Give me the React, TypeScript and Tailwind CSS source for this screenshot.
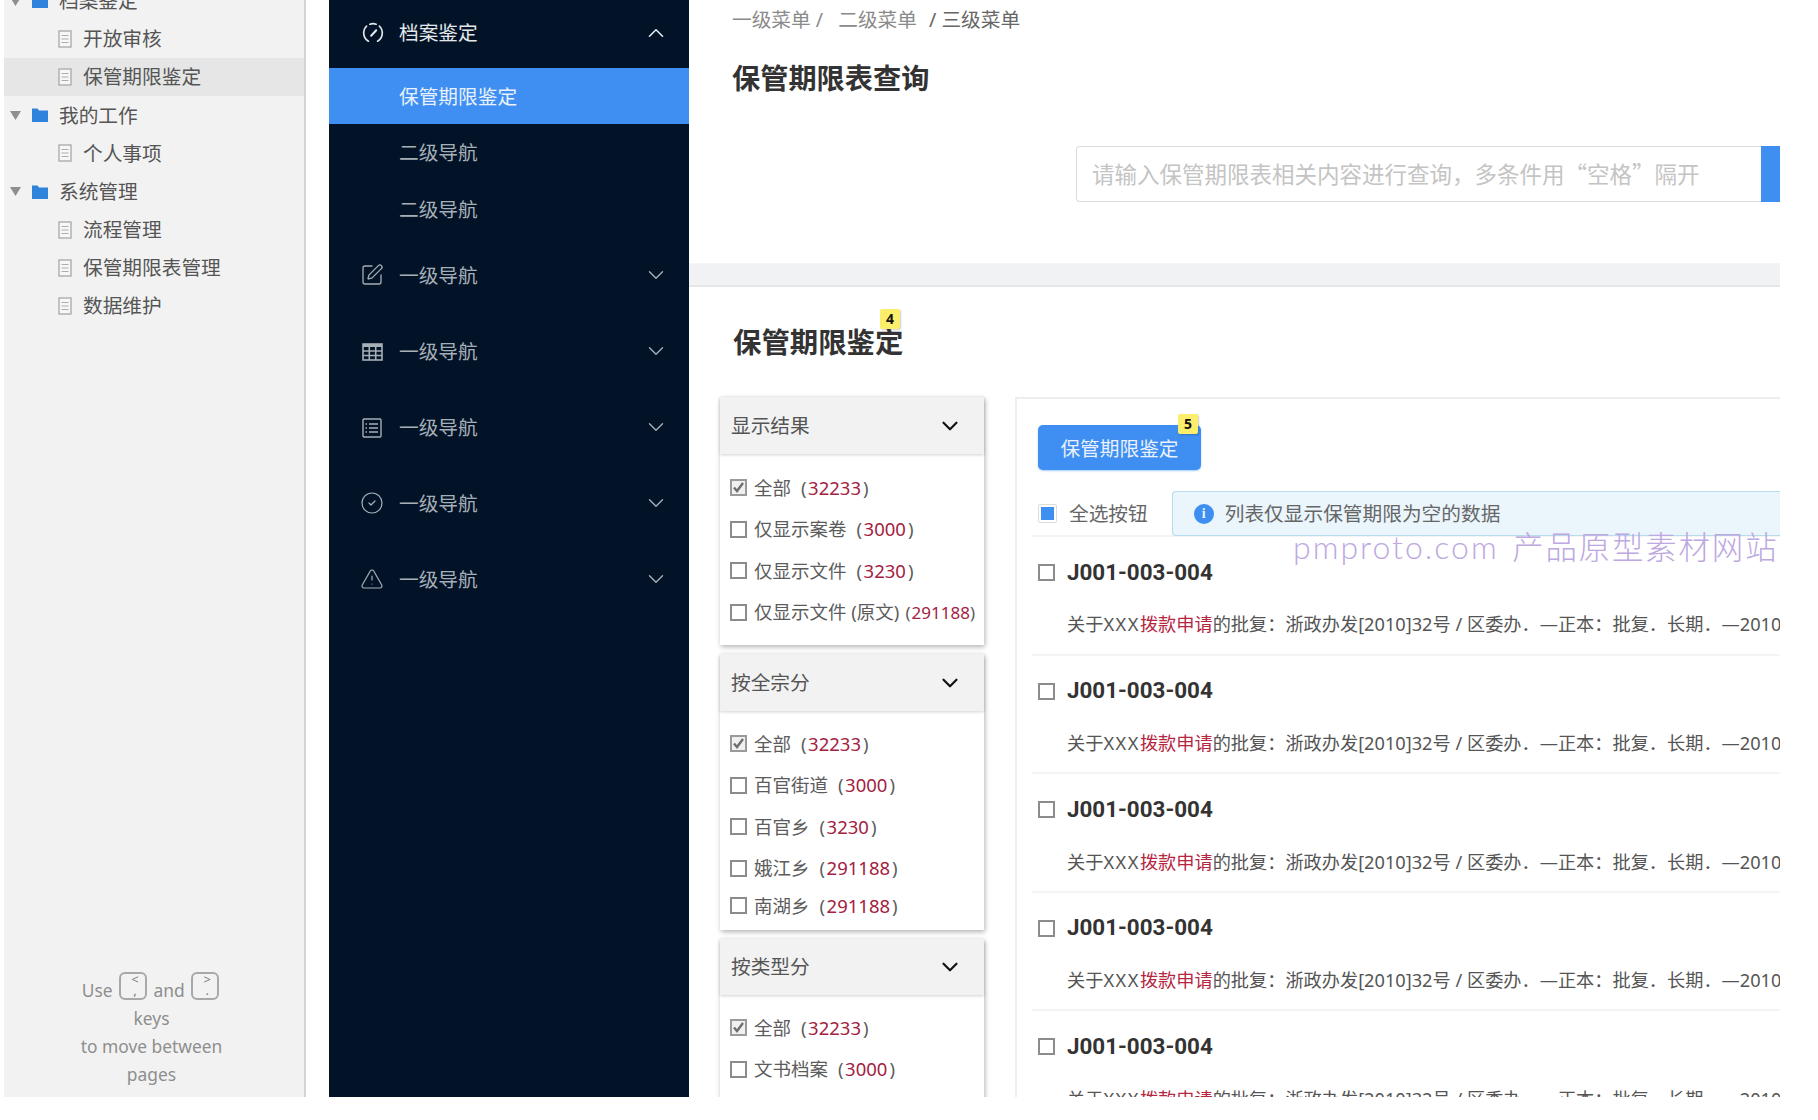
import React from "react";
import { SquarePen, CircleCheck, TriangleAlert, ChevronDown, ChevronUp } from "lucide-react";

const FONT = "[font-family:'Noto_Sans','Noto_Sans_CJK_SC',sans-serif]";

function Gauge() {
  return (
    <svg width="22" height="22" viewBox="0 0 24 24" fill="none" stroke="currentColor" strokeWidth="1.8" strokeLinecap="round">
      <path d="M7 21 A10.5 10.5 0 0 1 5 4.5" />
      <path d="M8.5 2.4 A10.5 10.5 0 0 1 15.5 2.4" />
      <path d="M19 4.5 A10.5 10.5 0 0 1 17 21" />
      <path d="M10 15 L15.5 9" strokeWidth="2.2" />
    </svg>
  );
}

function GridIcon() {
  return (
    <svg width="21" height="18" viewBox="0 0 21 18" fill="none" stroke="currentColor" strokeWidth="1.6">
      <rect x="1" y="1" width="19" height="16" />
      <path d="M1 2.5H20" strokeWidth="3" />
      <path d="M1 8H20M1 12.5H20M7.3 1V17M13.7 1V17" />
    </svg>
  );
}

function ListIcon() {
  return (
    <svg width="20" height="20" viewBox="0 0 20 20" fill="none" stroke="currentColor" strokeWidth="1.4">
      <rect x="1" y="1" width="18" height="18" rx="1" />
      <path d="M7 6H16M7 10H16M7 14H16" />
      <path d="M3.5 6H5M3.5 10H5M3.5 14H5" />
    </svg>
  );
}

function DocIcon() {
  return (
    <svg width="14" height="18" viewBox="0 0 14 18" fill="#f7f7f7" stroke="#adadad" strokeWidth="1.4">
      <rect x="1" y="1" width="12" height="16" />
      <path d="M3.5 5.5H10.5M3.5 9H10.5M3.5 12.5H10.5" strokeWidth="1.2" />
    </svg>
  );
}

function FolderIcon() {
  return (
    <svg width="16" height="14" viewBox="0 0 16 14" fill="#2f83da">
      <path d="M0 0.5H5.5L7 2.5H16V14H0Z" />
    </svg>
  );
}

function Caret() {
  return (
    <svg width="11" height="9" viewBox="0 0 11 9" fill="#8f8f8f">
      <path d="M0 0H11L5.5 9Z" />
    </svg>
  );
}

function TreeParent({ label }: { label: string }) {
  return (
    <div className="flex h-[38.1px] items-center">
      <span className="ml-[6px] flex w-[17px] justify-start"><Caret /></span>
      <span className="ml-[5px]"><FolderIcon /></span>
      <span className="ml-[11px] text-[19.7px] text-[#555555]">{label}</span>
    </div>
  );
}

function TreeChild({ label, active }: { label: string; active?: boolean }) {
  return (
    <div className={`flex h-[38.1px] items-center pl-[54px] ${active ? "bg-[#e6e6e6]" : ""}`}>
      <DocIcon />
      <span className="ml-[11px] text-[19.7px] text-[#555555]">{label}</span>
    </div>
  );
}

function KeyCap({ top, bottom }: { top: string; bottom: string }) {
  return (
    <span className="relative -top-[4px] mx-[2px] inline-flex h-[28px] w-[28px] flex-col rounded-[6px] border-2 border-[#a8a8a8] pl-[4px] align-top text-[13px] leading-[11px] text-[#7e7e7e]">
      <span>{top}</span>
      <span>{bottom}</span>
    </span>
  );
}

function LeftPanel() {
  return (
    <aside className="relative flex h-full w-[302px] shrink-0 flex-col border-r-2 border-[#d4d4d4] bg-[#f2f2f2]">
      <div className="mt-[-18px]">
        <TreeParent label="档案鉴定" />
        <TreeChild label="开放审核" />
        <TreeChild label="保管期限鉴定" active />
        <TreeParent label="我的工作" />
        <TreeChild label="个人事项" />
        <TreeParent label="系统管理" />
        <TreeChild label="流程管理" />
        <TreeChild label="保管期限表管理" />
        <TreeChild label="数据维护" />
      </div>
      <div className="mt-auto pb-[9px] pr-[5px] text-center text-[17.4px] leading-[28px] text-[#8e8e8e]">
        <div>
          Use <KeyCap top="<" bottom="," /> and <KeyCap top=">" bottom="." />
        </div>
        <div>keys</div>
        <div>to move between</div>
        <div>pages</div>
      </div>
    </aside>
  );
}

function NavRow({ icon, label }: { icon: React.ReactNode; label: string }) {
  return (
    <div className="flex h-[76px] items-center text-[#a7afb6]">
      <span className="flex w-[70px] justify-start pl-[33px]">{icon}</span>
      <span className="text-[19.7px]">{label}</span>
      <ChevronDown className="ml-auto mr-[20px] -translate-y-[1px]" size={26} strokeWidth={1.3} />
    </div>
  );
}

function Nav() {
  return (
    <nav className="h-full w-[360px] shrink-0 bg-[#021328]">
      <div className="flex h-[68px] items-center pb-[3px] text-[#e4e8ea]">
        <span className="flex w-[70px] pl-[33px]"><Gauge /></span>
        <span className="text-[19.7px]">档案鉴定</span>
        <ChevronUp className="ml-auto mr-[20px]" size={26} strokeWidth={1.5} />
      </div>
      <div className="flex h-[56px] items-center bg-[#3f8ef1] pl-[70px] pt-[2px] text-[19.7px] text-[#e8f1fc]">保管期限鉴定</div>
      <div className="flex h-[57px] items-center pl-[70px] pt-[1px] text-[19.7px] text-[#a7afb6]">二级导航</div>
      <div className="flex h-[57px] items-center pl-[70px] text-[19.7px] text-[#a7afb6]">二级导航</div>
      <NavRow icon={<SquarePen className="-ml-[2px] -translate-y-[1px]" size={24} strokeWidth={1.3} />} label="一级导航" />
      <NavRow icon={<GridIcon />} label="一级导航" />
      <NavRow icon={<ListIcon />} label="一级导航" />
      <NavRow icon={<CircleCheck className="-ml-[2px] -translate-y-[1px]" size={24} strokeWidth={1.2} />} label="一级导航" />
      <NavRow icon={<TriangleAlert className="-ml-[2px] -translate-y-[1px]" size={24} strokeWidth={1.2} />} label="一级导航" />
    </nav>
  );
}

function Badge({ n, className }: { n: number; className: string }) {
  return (
    <span className={`absolute flex h-[20px] w-[20px] items-center justify-center rounded-[2px] bg-[#fbee6a] text-[14px] font-bold leading-none text-[#111111] shadow-[1px_1px_2px_rgba(0,0,0,0.2)] ${className}`}>
      {n}
    </span>
  );
}

function Check({ checked }: { checked?: boolean }) {
  return (
    <span className={`relative flex h-[17px] w-[17px] shrink-0 items-center justify-center border-2 ${checked ? "border-[#9a9a9a] bg-[#f0f0f0]" : "border-[#8c8c8c] bg-white"}`}>
      {checked && (
        <svg width="13" height="13" viewBox="0 0 13 13" fill="none" stroke="#6f6f6f" strokeWidth="2.4">
          <path d="M2 6.5L5 10L11 2" />
        </svg>
      )}
    </span>
  );
}

type FacetRow = { label: string; count: string; checked?: boolean; short?: boolean; tight?: boolean };

function Facet({ title, rows, headerH, bodyH }: { title: string; rows: FacetRow[]; headerH: string; bodyH: string }) {
  return (
    <section className="w-[264px] bg-white shadow-[1px_2px_5px_rgba(0,0,0,0.3)]">
      <div className={`flex ${headerH} items-center justify-between bg-[#f2f2f2] pl-[11px] pr-[21px] shadow-[0_1px_3px_rgba(0,0,0,0.18)]`}>
        <span className="text-[19.7px] text-[#555555]">{title}</span>
        <ChevronDown className="text-[#111111]" size={26} strokeWidth={2} />
      </div>
      <div className={`flex ${bodyH} flex-col pl-[10px]`}>
        {rows.map((r) => (
          <div key={r.label} className={`flex ${r.short ? "h-[33.5px]" : "h-[41.5px]"} items-center gap-[7px] whitespace-nowrap text-[18.5px] text-[#5c5c5c]`}>
            <Check checked={r.checked} />
            <span>
              {r.label}
              <span className={r.tight ? "ml-[6px] text-[17px]" : "ml-[10px]"}>(</span>
              <span className={r.tight ? "ml-[1px] text-[17px] text-[#a3213f]" : "ml-[1.5px] text-[#a3213f]"}>{r.count}</span>
              <span className={r.tight ? "text-[17px]" : "ml-[2px]"}>)</span>
            </span>
          </div>
        ))}
      </div>
    </section>
  );
}

function ResultRow({ last }: { last?: boolean }) {
  return (
    <div className={`ml-[15px] h-[118.6px] ${last ? "" : "border-b-2 border-[#f4f4f4]"}`}>
      <div className="flex h-[70px] items-center pl-[6px] pt-[1px]">
        <Check />
        <span className="ml-[12px] text-[22.4px] font-bold text-[#333333] [font-family:'Roboto',sans-serif]">J001-003-004</span>
      </div>
      <div className="flex h-[36px] items-center whitespace-nowrap pl-[35px] text-[18.2px] text-[#555555]">
        关于<span className="tracking-[1.5px]">XXX</span><span className="text-[#b5263f]">拨款申请</span>的批复：浙政办发[2010]32号 / 区委办．—正本：批复．长期．—2010
      </div>
    </div>
  );
}

export default function App() {
  const f1: FacetRow[] = [
    { label: "全部", count: "32233", checked: true },
    { label: "仅显示案卷", count: "3000" },
    { label: "仅显示文件", count: "3230" },
    { label: "仅显示文件 (原文)", count: "291188", tight: true },
  ];
  const f2: FacetRow[] = [
    { label: "全部", count: "32233", checked: true },
    { label: "百官街道", count: "3000" },
    { label: "百官乡", count: "3230" },
    { label: "娥江乡", count: "291188" },
    { label: "南湖乡", count: "291188", short: true },
  ];
  const f3: FacetRow[] = [
    { label: "全部", count: "32233", checked: true },
    { label: "文书档案", count: "3000" },
  ];
  return (
    <div className={`h-[1120px] w-[1818px] overflow-hidden bg-white ${FONT}`}>
      <div className="ml-[4px] flex h-[1097px] w-[1776px] overflow-hidden">
        <LeftPanel />
        <div className="w-[23px] shrink-0" />
        <Nav />
        <main className="relative min-w-0 flex-1 overflow-hidden">
          <div className="flex h-[263px] flex-col pl-[43px]">
            <div className="flex h-[40px] items-center gap-[6px] text-[19.7px] text-[#8a8a8a]">
              <span>一级菜单 /</span>
              <span className="ml-[9px]">二级菜单</span>
              <span className="ml-[6px] text-[#666666]">/ 三级菜单</span>
            </div>
            <h1 className="mt-[17px] text-[28.2px] font-bold leading-[42px] text-[#333333]">保管期限表查询</h1>
            <div className="ml-[344px] mt-[47px] flex h-[56px]">
              <div className="flex min-w-0 flex-1 items-center whitespace-nowrap rounded-l-[4px] border border-r-0 border-[#dcdcdc] pl-[15px] text-[22.5px] text-[#c4c4c4] [font-family:'Noto_Sans_CJK_SC',sans-serif]">
                请输入保管期限表相关内容进行查询，多条件用“空格”隔开
              </div>
              <div className="w-[19px] bg-[#3f8ef1]" />
            </div>
          </div>
          <div className="h-[24px] border-b-2 border-t border-b-[#e6e6e6] border-t-[#f6f6f6] bg-[#f1f2f4]" />
          <div className="relative h-[110px] pl-[44px]">
            <h2 className="inline-block pt-[34px] text-[28.4px] font-bold leading-[42px] text-[#333333]">保管期限鉴定</h2>
            <Badge n={4} className="left-[191px] top-[22px]" />
          </div>
          <div className="flex">
            <div className="ml-[31px] flex flex-col gap-[9px]">
              <Facet title="显示结果" headerH="h-[57px]" bodyH="h-[191px] pt-[13px]" rows={f1} />
              <Facet title="按全宗分" headerH="h-[57px]" bodyH="h-[219px] pt-[12px]" rows={f2} />
              <Facet title="按类型分" headerH="h-[56px]" bodyH="h-[110px] pt-[12px]" rows={f3} />
            </div>
            <div className="ml-[31px] min-w-0 flex-1 border-l-2 border-t-2 border-[#eeeeee]">
              <div className="relative ml-[21px] mt-[26px] flex h-[45px] w-[163px] items-center justify-center rounded-[5px] bg-[#3f8ef1] pt-[2px] text-[19.7px] text-[#e8f1fc] shadow-[0_1px_2px_rgba(100,170,240,0.6)]">
                保管期限鉴定
                <Badge n={5} className="right-[3px] top-[-11px]" />
              </div>
              <div className="ml-[15px] mt-[22px] flex h-[45px] items-center border-b-2 border-[#f4f4f4] pl-[6px]">
                <span className="flex h-[19px] w-[19px] items-center justify-center rounded-[2px] border border-[#dcdcdc] bg-white">
                  <span className="h-[13px] w-[13px] bg-[#3f8ef1]" />
                </span>
                <span className="ml-[12px] text-[19.7px] text-[#666666]">全选按钮</span>
                <div className="ml-[24px] flex h-[45px] flex-1 items-center rounded-l-[4px] border border-r-0 border-[#b7dcee] bg-[#eaf5fc] pl-[21px] pt-[1px]">
                  <span className="flex h-[20px] w-[20px] items-center justify-center rounded-full bg-[#3f8ef1] text-[14px] font-bold leading-none text-[#eaf5fc] [font-family:'Liberation_Serif',serif]">i</span>
                  <span className="ml-[11px] text-[19.7px] text-[#666666]">列表仅显示保管期限为空的数据</span>
                </div>
              </div>
              <ResultRow />
              <ResultRow />
              <ResultRow />
              <ResultRow />
              <ResultRow last />
            </div>
          </div>
          <div className="pointer-events-none absolute left-[604px] top-[526px] whitespace-nowrap text-[32px] font-light leading-[42px] tracking-[2px] text-[#bda8e0] [font-family:'Lato','Noto_Sans_CJK_SC',sans-serif]">
            pmproto.com<span className="ml-[3px] text-[31.4px] tracking-[1.9px]"> 产品原型素材网站</span>
          </div>
        </main>
      </div>
    </div>
  );
}
